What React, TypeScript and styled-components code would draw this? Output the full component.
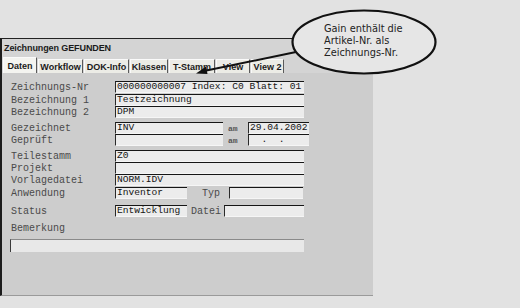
import React from 'react';
import styled, {createGlobalStyle} from 'styled-components';

const GlobalStyle = createGlobalStyle`
  html, body {
    margin: 0;
    padding: 0;
    background: #e2e2e2;
  }
  #root {
    width: 520px;
    height: 308px;
    position: relative;
    overflow: hidden;
  }
`;

const Page = styled.div`
  width: 520px;
  height: 308px;
  padding-top: 38px;
  box-sizing: border-box;
  background: #e2e2e2;
`;

const Window = styled.div`
  width: 373px;
  height: 258px;
  box-sizing: border-box;
  display: flex;
  flex-direction: column;
  background: #d4d4d4;
  border-top: 1px solid #222;
  border-left: 2px solid #1c1c1c;
  border-bottom: 1px solid #9a9a9a;
`;

const TitleBar = styled.div`
  height: 17px;
  display: flex;
  align-items: center;
  padding-left: 2px;
  font-family: "Liberation Sans", Arial, sans-serif;
  font-weight: bold;
  font-size: 9px;
  color: #1a1a1a;
  letter-spacing: -0.1px;
`;

const TabRow = styled.div`
  height: 17px;
  display: flex;
  align-items: flex-end;
  gap: 1px;
  padding-left: 1px;
`;

type TabPropsType = {
    $active?: boolean
    $width: number
}

const Tab = styled.div<TabPropsType>`
  width: ${props => props.$width}px;
  height: ${props => props.$active ? 16 : 14}px;
  box-sizing: border-box;
  display: flex;
  align-items: center;
  justify-content: center;
  background: ${props => props.$active ? '#f4f4f0' : '#ecece6'};
  border-top: 1px solid #fafafa;
  border-left: 1px solid #fafafa;
  border-right: 1px solid #5a5a5a;
  font-family: "Liberation Sans", Arial, sans-serif;
  font-weight: bold;
  font-size: 9px;
  color: #1a1a1a;
  white-space: nowrap;
`;

const Content = styled.div`
  flex: 1;
  display: flex;
  flex-direction: column;
  padding: 8px 0 0 9px;
  background: #cdcdcd;
`;

type RowPropsType = {
    $gap?: number
}

const Row = styled.div<RowPropsType>`
  height: 12px;
  margin-top: ${props => props.$gap || 0}px;
  display: flex;
  align-items: center;
`;

const Label = styled.span`
  width: 104px;
  flex-shrink: 0;
  font-family: "Liberation Mono", "Courier New", monospace;
  font-size: 10px;
  color: #4a4a4a;
  white-space: pre;
`;

type InlineLabelPropsType = {
    $left: number
    $right: number
}

const InlineLabel = styled.span<InlineLabelPropsType>`
  margin: 0 ${props => props.$right}px 0 ${props => props.$left}px;
  font-family: "Liberation Mono", "Courier New", monospace;
  font-size: 10px;
  color: #4a4a4a;
  white-space: pre;
`;

const DateLabel = styled.span`
  width: 20px;
  flex-shrink: 0;
  padding-left: 5px;
  font-family: "Liberation Mono", "Courier New", monospace;
  font-size: 8px;
  font-weight: bold;
  color: #555;
`;

type FieldPropsType = {
    $width: number
}

const Field = styled.div<FieldPropsType>`
  width: ${props => props.$width}px;
  height: 12px;
  flex-shrink: 0;
  box-sizing: border-box;
  padding-left: 1px;
  background: #ececec;
  border-top: 1px solid #161616;
  border-left: 1px solid #2a2a2a;
  border-bottom: 1px solid #f6f6f6;
  font-family: "Liberation Mono", "Courier New", monospace;
  font-size: 9.6px;
  line-height: 10px;
  color: #141414;
  white-space: pre;
  overflow: hidden;
`;

const RemarkField = styled.div`
  margin: 5px 0 0 -1px;
  width: 294px;
  height: 13px;
  box-sizing: border-box;
  background: #e8e8e8;
  border-top: 1px solid #8a8a8a;
  border-left: 1px solid #3a3a3a;
`;

const Callout = styled.div`
  position: absolute;
  left: 291px;
  top: 9px;
  width: 146px;
  height: 66px;
`;

const CalloutText = styled.div`
  position: absolute;
  left: 33px;
  top: 14px;
  font-family: "DejaVu Sans", Verdana, sans-serif;
  font-size: 9.8px;
  line-height: 11.8px;
  color: #222;
`;

const Overlay = styled.svg`
  position: absolute;
  left: 0;
  top: 0;
  pointer-events: none;
`;

const tabs = [
  {name: 'Daten', width: 34, active: true},
  {name: 'Workflow', width: 45},
  {name: 'DOK-Info', width: 45},
  {name: 'Klassen', width: 38},
  {name: 'T-Stamm', width: 46},
  {name: 'View', width: 34},
  {name: 'View 2', width: 33},
];

export default function App() {
  return <>
    <GlobalStyle/>
    <Page>
      <Window>
        <TitleBar>Zeichnungen GEFUNDEN</TitleBar>
        <TabRow>
          {tabs.map(tab => <Tab key={tab.name} $active={tab.active} $width={tab.width}>{tab.name}</Tab>)}
        </TabRow>
        <Content>
          <Row>
            <Label>Zeichnungs-Nr</Label>
            <Field $width={189}>000000000007 Index: C0 Blatt: 01</Field>
          </Row>
          <Row $gap={1}>
            <Label>Bezeichnung 1</Label>
            <Field $width={189}>Testzeichnung</Field>
          </Row>
          <Row>
            <Label>Bezeichnung 2</Label>
            <Field $width={189}>DPM</Field>
          </Row>
          <Row $gap={4}>
            <Label>Gezeichnet</Label>
            <Field $width={108}>INV</Field>
            <DateLabel>am</DateLabel>
            <Field $width={61}>29.04.2002</Field>
          </Row>
          <Row>
            <Label>Geprüft</Label>
            <Field $width={108}></Field>
            <DateLabel>am</DateLabel>
            <Field $width={61}>{'  .  .'}</Field>
          </Row>
          <Row $gap={4}>
            <Label>Teilestamm</Label>
            <Field $width={189}>Z0</Field>
          </Row>
          <Row>
            <Label>Projekt</Label>
            <Field $width={189}></Field>
          </Row>
          <Row>
            <Label>Vorlagedatei</Label>
            <Field $width={189}>NORM.IDV</Field>
          </Row>
          <Row $gap={1}>
            <Label>Anwendung</Label>
            <Field $width={72}>Inventor</Field>
            <InlineLabel $left={15} $right={9}>Typ</InlineLabel>
            <Field $width={74}></Field>
          </Row>
          <Row $gap={6}>
            <Label>Status</Label>
            <Field $width={72}>Entwicklung</Field>
            <InlineLabel $left={4} $right={3}>Datei</InlineLabel>
            <Field $width={80}></Field>
          </Row>
          <Row $gap={5}>
            <Label>Bemerkung</Label>
          </Row>
          <RemarkField/>
        </Content>
      </Window>
    </Page>

    <Overlay width={520} height={308}>
      <line x1={296} y1={52} x2={204} y2={71} stroke="#111" strokeWidth={2}/>
      <polygon points="196,73.5 206,66.5 207.5,74" fill="#111"/>
    </Overlay>
    <Callout>
      <svg width={146} height={66}>
        <ellipse cx={73} cy={33} rx={71.5} ry={31.5} fill="#e6e6e6" stroke="#111" strokeWidth={2.2}/>
      </svg>
      <CalloutText>
        Gain enthält die<br/>
        Artikel-Nr. als<br/>
        Zeichnungs-Nr.
      </CalloutText>
    </Callout>
  </>;
}
